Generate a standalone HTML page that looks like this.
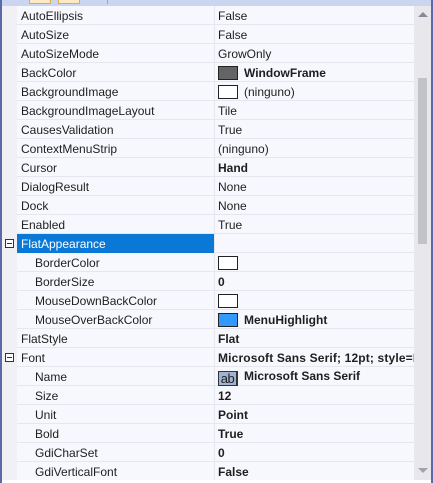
<!DOCTYPE html>
<html><head><style>
*{margin:0;padding:0;box-sizing:border-box}
body{width:433px;height:483px;overflow:hidden;background:#f5f6fb;font-family:"Liberation Sans",sans-serif;font-size:12px;color:#1e1e1e;position:relative}
.lb{position:absolute;left:0;top:0;width:2px;height:483px;background:#5b6aa6}
.rb{position:absolute;left:431px;top:0;width:2px;height:483px;background:#5b6aa6}
.tb{position:absolute;left:2px;top:0;width:429px;height:6px;background:#ccd5f0}
.btn{position:absolute;top:-2px;width:22px;height:6px;border:1px solid #e5a850;background:#fde9c4}
.grid{position:absolute;left:2px;top:6px;width:412px}
.row{height:19px;position:relative;border-bottom:1px solid #e6e7ee;background:#f7f8fd}
.mg{position:absolute;left:0;top:0;width:15px;height:19px;background:#f0f0f5}
.n{position:absolute;left:19px;top:3px;white-space:nowrap}
.n.i{left:33px}
.v{position:absolute;left:212px;top:0;height:19px;border-left:1px solid #e6e7ee;width:200px;overflow:hidden;white-space:nowrap;padding-left:3px;padding-top:3px}
.b{font-weight:bold}
.sw{display:inline-block;width:20px;height:14px;border:1px solid #222;vertical-align:-3px;margin-right:6px}
.ab{display:inline-block;width:20px;height:15px;border:1px solid #333;border-right:2px solid #333;background:#9fb4d0;font-weight:normal;font-size:13px;line-height:13px;text-align:center;vertical-align:-3px;margin-right:6px;letter-spacing:-0.5px}
.sel .n{color:#fff}
.sel .nb{position:absolute;left:15px;top:0;width:197px;height:19px;background:#0a78d7}
.pm{position:absolute;left:3px;top:5px;width:9px;height:9px;border:1px solid #333;background:#fff}
.pm:after{content:"";position:absolute;left:1px;top:3px;width:5px;height:1px;background:#333}
.sb{position:absolute;left:414px;top:6px;width:17px;height:474px;background:#e8e8ec}
.th{position:absolute;left:418px;top:78px;width:9px;height:166px;background:#c2c3c9}
.bot{position:absolute;left:2px;top:480px;width:429px;height:3px;background:#fff}
</style></head><body>
<div class="tb"><div class="btn" style="left:27px"></div><div class="btn" style="left:56px"></div><div style="position:absolute;left:105px;top:0;width:1px;height:4px;background:#9aa"></div></div>
<div class="grid">
<div class="row"><div class="mg"></div><div class="n">AutoEllipsis</div><div class="v">False</div></div>
<div class="row"><div class="mg"></div><div class="n">AutoSize</div><div class="v">False</div></div>
<div class="row"><div class="mg"></div><div class="n">AutoSizeMode</div><div class="v">GrowOnly</div></div>
<div class="row"><div class="mg"></div><div class="n">BackColor</div><div class="v b"><span class="sw" style="background:#646464"></span>WindowFrame</div></div>
<div class="row"><div class="mg"></div><div class="n">BackgroundImage</div><div class="v"><span class="sw" style="background:#fff"></span>(ninguno)</div></div>
<div class="row"><div class="mg"></div><div class="n">BackgroundImageLayout</div><div class="v">Tile</div></div>
<div class="row"><div class="mg"></div><div class="n">CausesValidation</div><div class="v">True</div></div>
<div class="row"><div class="mg"></div><div class="n">ContextMenuStrip</div><div class="v">(ninguno)</div></div>
<div class="row"><div class="mg"></div><div class="n">Cursor</div><div class="v b">Hand</div></div>
<div class="row"><div class="mg"></div><div class="n">DialogResult</div><div class="v">None</div></div>
<div class="row"><div class="mg"></div><div class="n">Dock</div><div class="v">None</div></div>
<div class="row"><div class="mg"></div><div class="n">Enabled</div><div class="v">True</div></div>
<div class="row sel"><div class="mg"><div class="pm"></div></div><div class="nb"></div><div class="n">FlatAppearance</div><div class="v"></div></div>
<div class="row"><div class="mg"></div><div class="n i">BorderColor</div><div class="v"><span class="sw" style="background:#fff"></span></div></div>
<div class="row"><div class="mg"></div><div class="n i">BorderSize</div><div class="v b">0</div></div>
<div class="row"><div class="mg"></div><div class="n i">MouseDownBackColor</div><div class="v"><span class="sw" style="background:#fff"></span></div></div>
<div class="row"><div class="mg"></div><div class="n i">MouseOverBackColor</div><div class="v b"><span class="sw" style="background:#3399ff"></span>MenuHighlight</div></div>
<div class="row"><div class="mg"></div><div class="n">FlatStyle</div><div class="v b">Flat</div></div>
<div class="row"><div class="mg"><div class="pm"></div></div><div class="n">Font</div><div class="v b" style="letter-spacing:0.15px">Microsoft Sans Serif; 12pt; style=Bold</div></div>
<div class="row"><div class="mg"></div><div class="n i">Name</div><div class="v b" style="padding-top:2px"><span class="ab">ab</span>Microsoft Sans Serif</div></div>
<div class="row"><div class="mg"></div><div class="n i">Size</div><div class="v b">12</div></div>
<div class="row"><div class="mg"></div><div class="n i">Unit</div><div class="v b">Point</div></div>
<div class="row"><div class="mg"></div><div class="n i">Bold</div><div class="v b">True</div></div>
<div class="row"><div class="mg"></div><div class="n i">GdiCharSet</div><div class="v b">0</div></div>
<div class="row"><div class="mg"></div><div class="n i">GdiVerticalFont</div><div class="v b">False</div></div>
</div>
<div class="sb"></div>
<div style="position:absolute;left:418px;top:12px;width:0;height:0;border-left:5px solid transparent;border-right:5px solid transparent;border-bottom:5px solid #868999"></div>
<div class="th"></div>
<div style="position:absolute;left:418px;top:468px;width:0;height:0;border-left:5px solid transparent;border-right:5px solid transparent;border-top:5px solid #a0a2ae"></div>
<div class="bot"></div>
<div class="lb"></div><div class="rb"></div>
</body></html>
